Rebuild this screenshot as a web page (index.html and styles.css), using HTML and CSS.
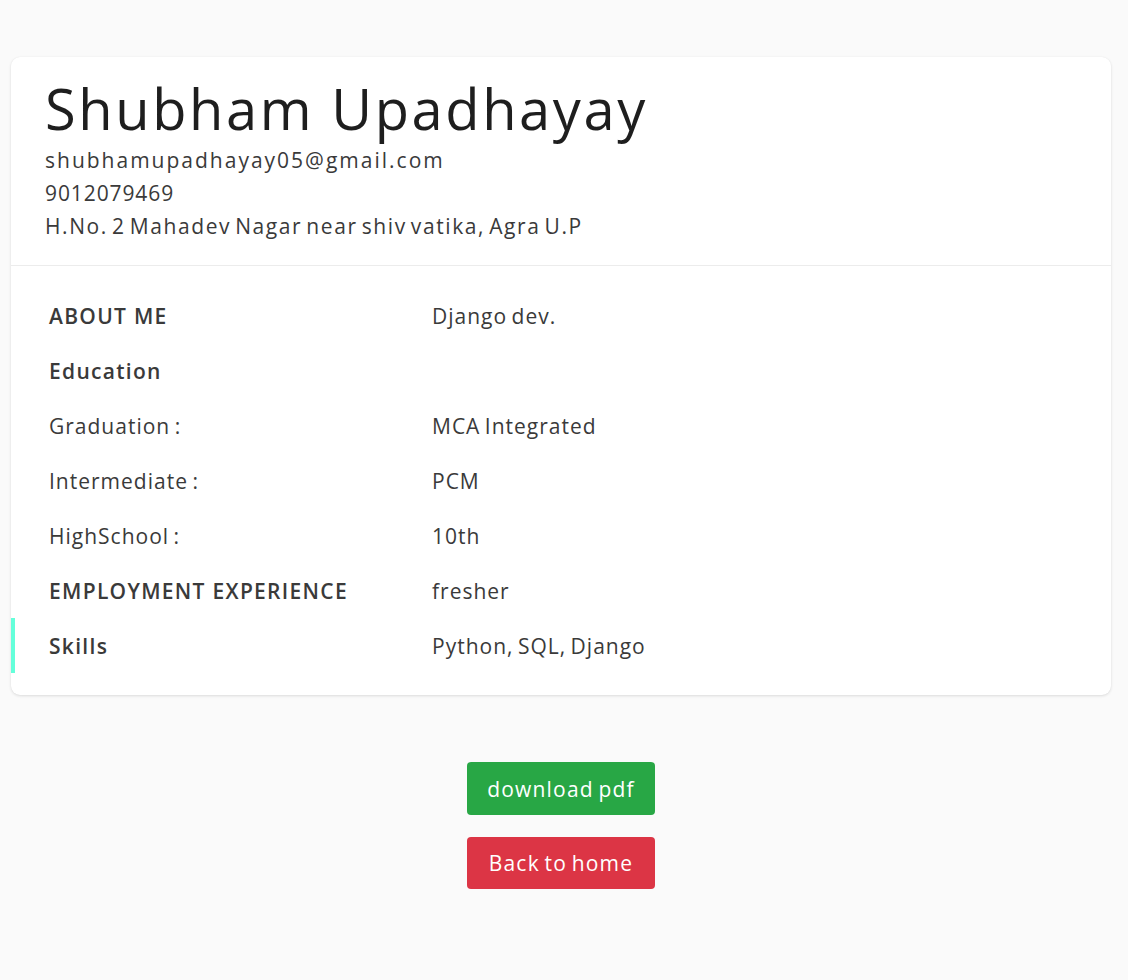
FILE: index.html
```html
<!DOCTYPE html>
<html lang="en">
<head>
<meta charset="utf-8">
<title>Shubham Upadhayay</title>
<link rel="stylesheet" href="styles.css">
</head>
<body>
<main class="page">
  <section class="card">
    <header class="card-head">
      <h1 class="name">Shubham Upadhayay</h1>
      <p class="line email">shubhamupadhayay05@gmail.com</p>
      <p class="line phone">9012079469</p>
      <p class="line">H.No. 2 Mahadev Nagar near shiv vatika, Agra U.P</p>
    </header>
    <div class="card-body">
      <div class="row"><span class="label">ABOUT ME</span><span class="value">Django dev.</span></div>
      <div class="row"><span class="label">Education</span><span class="value"></span></div>
      <div class="row"><span class="plain">Graduation :</span><span class="value">MCA Integrated</span></div>
      <div class="row"><span class="plain">Intermediate :</span><span class="value">PCM</span></div>
      <div class="row"><span class="plain">HighSchool :</span><span class="value">10th</span></div>
      <div class="row"><span class="label">EMPLOYMENT EXPERIENCE</span><span class="value">fresher</span></div>
      <div class="row active"><span class="label">Skills</span><span class="value">Python, SQL, Django</span></div>
    </div>
  </section>
  <div class="actions">
    <a class="btn btn-green" href="#">download pdf</a>
    <a class="btn btn-red" href="#">Back to home</a>
  </div>
</main>
</body>
</html>
```

FILE: styles.css
```css
html, body {
  margin: 0;
  padding: 0;
  background: #fafafa;
  font-family: "Open Sans", "Noto Sans", sans-serif;
  color: #3b3b3b;
}
.page {
  padding: 57px 17px 0 11px;
}
.card {
  background: #fff;
  border-radius: 9px;
  box-shadow: 0 1px 3px rgba(0,0,0,0.12), 0 0 1px rgba(0,0,0,0.06);
  overflow: hidden;
}
.card-head {
  padding: 18px 34px 22px 34px;
  border-bottom: 1px solid #ececec;
}
.name {
  margin: 0 0 3px 0;
  font-size: 56px;
  font-weight: 400;
  line-height: 66px;
  color: #1e1e1e;
  letter-spacing: 2.6px;
}
.line {
  margin: 0;
  font-size: 21px;
  line-height: 33px;
  font-weight: 400;
  color: #3a3a3a;
  letter-spacing: 1.6px;
  word-spacing: -3px;
}
.line.email { letter-spacing: 2px; }
.line.phone { letter-spacing: 0.9px; }
.card-body {
  padding: 22px 0 22px 0;
}
.row {
  display: grid;
  grid-template-columns: 383px 1fr;
  height: 55px;
  align-items: center;
  border-left: 4px solid transparent;
  padding-left: 34px;
  font-size: 21px;
}
.row.active {
  border-left-color: #64ffda;
}
.label {
  font-weight: 600;
  color: #3a3a3a;
  letter-spacing: 1.3px;
}
.plain, .value {
  font-weight: 400;
  color: #3a3a3a;
  letter-spacing: 1px;
  word-spacing: -2px;
}
.actions {
  display: flex;
  flex-direction: column;
  align-items: center;
  gap: 22px;
  padding-top: 67px;
}
.btn {
  display: flex;
  align-items: center;
  justify-content: center;
  width: 188px;
  height: 53px;
  border-radius: 4px;
  color: #fff;
  text-decoration: none;
  font-size: 21px;
  letter-spacing: 1.2px;
  word-spacing: -2px;
}
.btn-green { background: #28a745; }
.btn-red { background: #dc3545; height: 52px; }
```
